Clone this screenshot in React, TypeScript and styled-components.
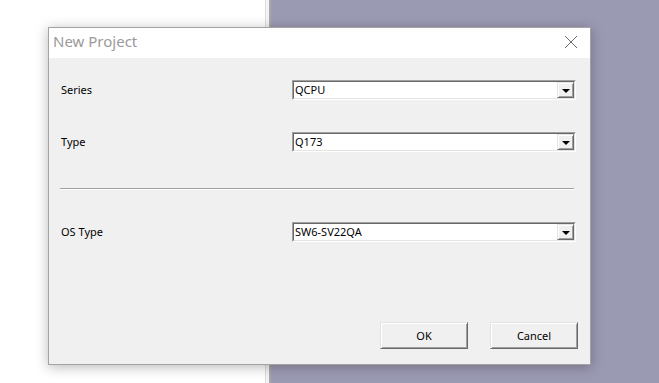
import React from "react";
import styled, { createGlobalStyle } from "styled-components";

const Global = createGlobalStyle`
  html, body { margin: 0; padding: 0; width: 659px; height: 383px; overflow: hidden; }
  body { font-family: "Noto Sans", "DejaVu Sans", sans-serif; }
  #root { width: 659px; height: 383px; }
`;

const Desktop = styled.div`
  position: relative;
  display: flex;
  width: 659px;
  height: 383px;
`;

const WhitePane = styled.div`
  width: 265px;
  background: #ffffff;
`;

const Splitter = styled.div`
  display: flex;
  width: 6px;
`;

const SplitLine = styled.div<{ $c: string; $w: number }>`
  width: ${(p) => p.$w}px;
  background: ${(p) => p.$c};
`;

const PurplePane = styled.div`
  flex: 1;
  background: #9b9ab3;
`;

const Dialog = styled.div`
  position: absolute;
  left: 48px;
  top: 27px;
  width: 541px;
  height: 336px;
  border: 1px solid #a3a3a3;
  background: #f0f0f0;
  box-shadow: 0 2px 12px rgba(0, 0, 0, 0.28);
  display: flex;
  flex-direction: column;
`;

const TitleBar = styled.div`
  height: 30px;
  background: #ffffff;
  display: flex;
  align-items: center;
  justify-content: space-between;
  padding: 0 12px 0 4px;
`;

const Title = styled.div`
  font-size: 15px;
  color: #9a9a9a;
  line-height: 30px;
  margin-top: -4px;
`;

const CloseBtn = styled.div`
  width: 14px;
  height: 14px;
  display: flex;
  margin-top: -3px;
`;

const Body = styled.div`
  flex: 1;
  display: flex;
  flex-direction: column;
  padding: 22px 13px 15px 12px;
`;

const Row = styled.div<{ $mt?: number }>`
  display: flex;
  align-items: center;
  height: 20px;
  margin-top: ${(p) => p.$mt ?? 0}px;
`;

const Label = styled.div`
  width: 231px;
  font-size: 11px;
  color: #000;
  margin-top: -1px;
`;

const Combo = styled.div`
  width: 284px;
  height: 20px;
  box-sizing: border-box;
  background: #ffffff;
  border-top: 1px solid #a0a0a0;
  border-left: 1px solid #a0a0a0;
  border-bottom: 1px solid #ffffff;
  border-right: 1px solid #ffffff;
  display: flex;
`;

const ComboInner = styled.div`
  flex: 1;
  display: flex;
  border-top: 1px solid #696969;
  border-left: 1px solid #696969;
  border-bottom: 1px solid #e3e3e3;
  border-right: 1px solid #e3e3e3;
`;

const ComboText = styled.div`
  flex: 1;
  font-size: 11px;
  color: #000;
  line-height: 16px;
  padding-left: 1px;
`;

const DropBtn = styled.div`
  width: 17px;
  box-sizing: border-box;
  background: #f0f0f0;
  border-top: 1px solid #e3e3e3;
  border-left: 1px solid #e3e3e3;
  border-bottom: 1px solid #696969;
  border-right: 1px solid #696969;
  box-shadow: inset 1px 1px 0 #ffffff, inset -1px -1px 0 #a0a0a0;
  display: flex;
  align-items: center;
  justify-content: center;
`;

const Arrow = styled.div`
  width: 0;
  height: 0;
  border-left: 4px solid transparent;
  border-right: 4px solid transparent;
  border-top: 4px solid #000;
  margin-top: 1px;
`;

const Divider = styled.div`
  margin: 36px 3px 0 -1px;
  height: 0;
  border-top: 1px solid #a0a0a0;
  border-bottom: 1px solid #ffffff;
`;

const Buttons = styled.div`
  margin-top: auto;
  display: flex;
  justify-content: flex-end;
  gap: 22px;
  margin-right: -1px;
`;

const Button = styled.div`
  width: 88px;
  height: 27px;
  box-sizing: border-box;
  background: #f0f0f0;
  border-top: 1px solid #e3e3e3;
  border-left: 1px solid #e3e3e3;
  border-bottom: 1px solid #696969;
  border-right: 1px solid #696969;
  box-shadow: inset 1px 1px 0 #ffffff, inset -1px -1px 0 #a0a0a0;
  display: flex;
  align-items: center;
  justify-content: center;
  font-size: 11px;
  color: #000;
`;

const ComboBox = ({ value }: { value: string }) => (
  <Combo>
    <ComboInner>
      <ComboText>{value}</ComboText>
      <DropBtn>
        <Arrow />
      </DropBtn>
    </ComboInner>
  </Combo>
);

export default function App() {
  return (
    <>
      <Global />
      <Desktop>
        <WhitePane />
        <Splitter>
          <SplitLine $c="#dcdcdc" $w={1} />
          <SplitLine $c="#f4f4f4" $w={3} />
          <SplitLine $c="#a8a8a8" $w={2} />
        </Splitter>
        <PurplePane />
        <Dialog>
          <TitleBar>
            <Title>New Project</Title>
            <CloseBtn>
              <svg width="14" height="14" viewBox="0 0 14 14">
                <path d="M1 1 L13 13 M13 1 L1 13" stroke="#6a6a6a" strokeWidth="1" fill="none" />
              </svg>
            </CloseBtn>
          </TitleBar>
          <Body>
            <Row>
              <Label>Series</Label>
              <ComboBox value="QCPU" />
            </Row>
            <Row $mt={32}>
              <Label>Type</Label>
              <ComboBox value="Q173" />
            </Row>
            <Divider />
            <Row $mt={32}>
              <Label>OS Type</Label>
              <ComboBox value="SW6-SV22QA" />
            </Row>
            <Buttons>
              <Button>OK</Button>
              <Button>Cancel</Button>
            </Buttons>
          </Body>
        </Dialog>
      </Desktop>
    </>
  );
}
